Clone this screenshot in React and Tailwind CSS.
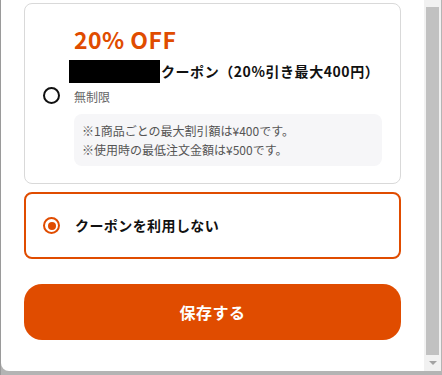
import React from "react";

const font = "font-['Noto_Sans_CJK_JP','Noto_Sans',sans-serif]";

function Radio({ checked }) {
  return checked ? (
    <span className="flex h-[17px] w-[17px] shrink-0 items-center justify-center rounded-full border-2 border-[#e04c00]">
      <span className="h-[8px] w-[8px] rounded-full bg-[#e04c00]" />
    </span>
  ) : (
    <span className="h-[17px] w-[17px] shrink-0 rounded-full border-2 border-[#111]" />
  );
}

export default function App() {
  return (
    <div className={`flex h-[375px] w-[442px] overflow-hidden bg-[#b4b4b4] ${font}`}>
      <div className="w-px bg-[#9a9a9a]" />
      <div className="flex h-[371px] w-[440px] overflow-hidden rounded-bl-lg bg-white">
        {/* content */}
        <div className="flex w-[423px] flex-col px-[23px] pt-[3px]">
          <div className="flex items-center gap-[14px] rounded-lg border border-[#d9d9d9] pb-[17px] pl-[18px] pr-[18px] pt-[20px]">
            <Radio />
            <div className="flex flex-1 flex-col">
              <div className="text-[23px] font-bold leading-[30px] tracking-[0.02em] text-[#e04c00]">
                20% OFF
              </div>
              <div className="mt-[6px] flex items-center">
                <span className="-ml-[5px] h-[23px] w-[91px] bg-black" />
                <span className="ml-px text-[14px] font-bold leading-[23px] tracking-[0.04em] text-[#111]">
                  クーポン（20%引き最大400円）
                </span>
              </div>
              <div className="mt-[5px] text-[12px] leading-[18px] text-[#666]">無制限</div>
              <div className="mt-[8px] rounded-lg bg-[#f6f6f8] px-2 pb-[7px] pt-[7px] text-[12px] leading-[19px] text-[#555]">
                <p>※1商品ごとの最大割引額は¥400です。</p>
                <p>※使用時の最低注文金額は¥500です。</p>
              </div>
            </div>
          </div>

          <div className="mt-[8px] flex h-[67px] items-center gap-[15px] rounded-lg border-2 border-[#e04c00] pl-[17px]">
            <Radio checked />
            <span className="text-[14px] font-bold tracking-[0.03em] text-[#111]">
              クーポンを利用しない
            </span>
          </div>

          <button className="mt-[25px] flex h-[56px] items-center justify-center rounded-[18px] bg-[#e04c00] text-[16px] font-bold tracking-[0.03em] text-white">
            保存する
          </button>
        </div>

        {/* scrollbar */}
        <div className="flex w-[17px] flex-col items-center bg-[#f1f1f1]">
          <div className="mt-[7px] h-[348px] w-[13px] bg-[#c1c1c1]" />
          <div className="mt-[6px] h-0 w-0 border-x-[4px] border-t-[4px] border-x-transparent border-t-[#a3a3a3]" />
        </div>
      </div>
    </div>
  );
}
